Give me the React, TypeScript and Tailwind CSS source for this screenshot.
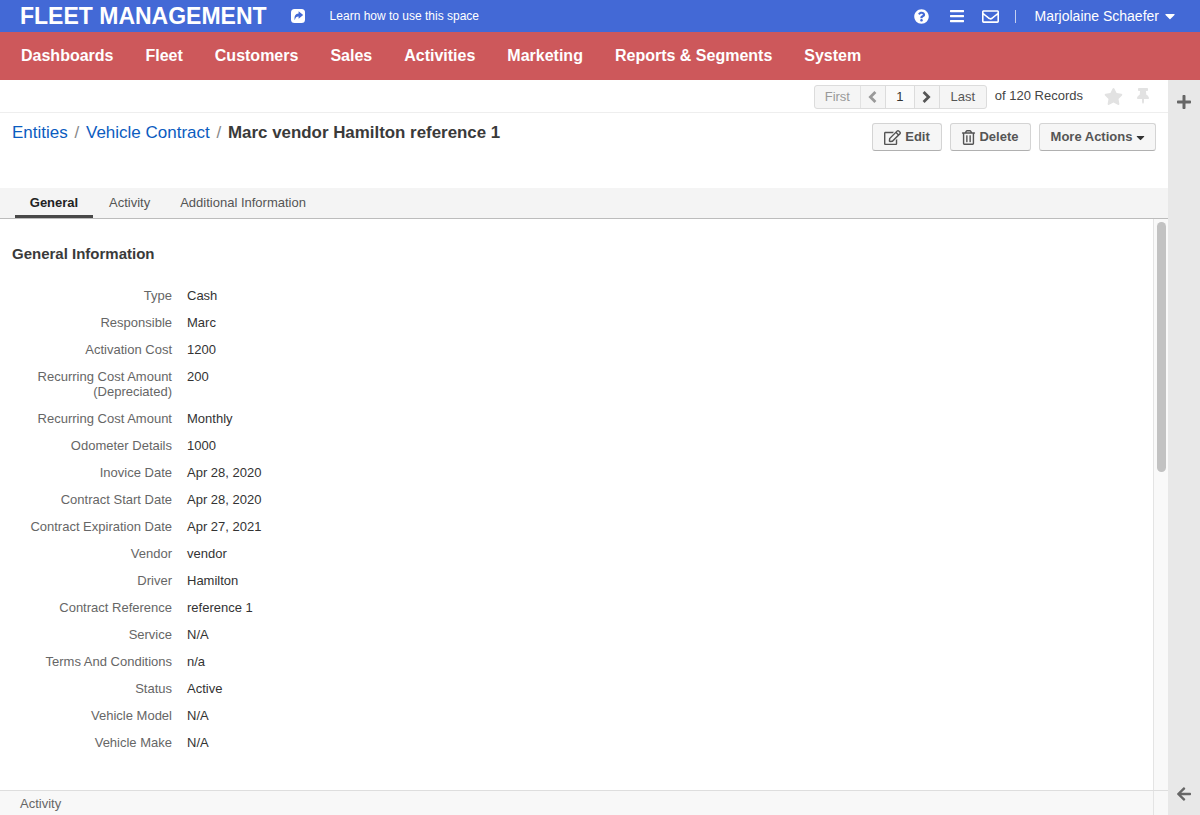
import type { ReactNode } from "react";
import {
  FaArrowLeft,
  FaBars,
  FaCaretDown,
  FaPlus,
  FaQuestionCircle,
  FaRegEdit,
  FaRegEnvelope,
  FaRegTrashAlt,
  FaStar,
  FaThumbtack,
} from "react-icons/fa";

const navItems = ["Dashboards", "Fleet", "Customers", "Sales", "Activities", "Marketing", "Reports & Segments", "System"];

const fields: [string, string][] = [
  ["Type", "Cash"],
  ["Responsible", "Marc"],
  ["Activation Cost", "1200"],
  ["Recurring Cost Amount (Depreciated)", "200"],
  ["Recurring Cost Amount", "Monthly"],
  ["Odometer Details", "1000"],
  ["Inovice Date", "Apr 28, 2020"],
  ["Contract Start Date", "Apr 28, 2020"],
  ["Contract Expiration Date", "Apr 27, 2021"],
  ["Vendor", "vendor"],
  ["Driver", "Hamilton"],
  ["Contract Reference", "reference 1"],
  ["Service", "N/A"],
  ["Terms And Conditions", "n/a"],
  ["Status", "Active"],
  ["Vehicle Model", "N/A"],
  ["Vehicle Make", "N/A"],
];

// solid rounded square with the share arrow cut out
function ShareIcon() {
  return (
    <svg viewBox="0 0 14 14" className="ml-[24px] w-[14px] h-[14px]">
      <rect width="14" height="14" rx="3.5" fill="#ffffff" />
      <path d="M7.6 2.2 L12.2 6 L7.6 9.8 V7.6 C5.6 7.5 4.4 8.6 3.8 11.2 C2.8 7.4 4.4 4.6 7.6 4.4 Z" fill="#4369d6" />
    </svg>
  );
}

// thick pager chevron
function Chevron({ direction }: { direction: "left" | "right" }) {
  return (
    <svg viewBox="0 0 9 12" className="w-[9px] h-[12px]" fill="none" stroke="currentColor" strokeWidth="2.8">
      <path d={direction === "left" ? "M7.4 1 L2.4 6 L7.4 11" : "M1.6 1 L6.6 6 L1.6 11"} />
    </svg>
  );
}

function Header() {
  return (
    <>
      <div className="h-8 bg-[#4369d6] text-white flex items-center pl-5 pr-[22px]">
        <span className="text-[23px] font-bold leading-8">FLEET MANAGEMENT</span>
        <ShareIcon />
        <span className="ml-[25px] text-[12px]">Learn how to use this space</span>
        <div className="ml-auto flex items-center">
          <FaQuestionCircle className="text-[15px]" />
          <FaBars className="ml-[20px] text-[16px]" />
          <FaRegEnvelope className="ml-[17px] text-[17px]" />
          <div className="ml-[16px] w-px h-[13px] bg-[#c5d0f0]" />
          <span className="ml-[18px] text-[14px]">Marjolaine Schaefer</span>
          <FaCaretDown className="ml-[3px] text-[16px]" />
        </div>
      </div>
      <nav className="h-12 bg-[#cd585b] text-white flex items-center pl-[21px] gap-[32px]">
        {navItems.map((item) => (
          <span key={item} className="text-[16px] font-bold">
            {item}
          </span>
        ))}
      </nav>
    </>
  );
}

function Pager() {
  return (
    <div className="h-[33px] border-b border-[#eeeeee] flex items-center justify-end pr-[17px] text-[13px]">
      <div className="flex h-[24px] mt-px items-stretch border border-[#dcdcdc] rounded-[3px] bg-[#f5f5f5] text-[#555]">
        <span className="w-[46px] flex items-center justify-center text-[#999] border-r border-[#e2e2e2]">First</span>
        <span className="w-[25px] flex items-center justify-center text-[#999] border-r border-[#dcdcdc]">
          <Chevron direction="left" />
        </span>
        <span className="w-[29px] flex items-center justify-center bg-[#fafafa] text-[#333] border-r border-[#dcdcdc]">1</span>
        <span className="w-[25px] flex items-center justify-center border-r border-[#dcdcdc]">
          <Chevron direction="right" />
        </span>
        <span className="w-[46px] flex items-center justify-center">Last</span>
      </div>
      <span className="ml-[8px] text-[#444]">of 120 Records</span>
      <FaStar className="ml-[21px] text-[19px] text-[#e2e2e2]" />
      <FaThumbtack className="ml-[12px] text-[16px] text-[#e2e2e2]" />
    </div>
  );
}

function ActionButton({ icon, label, width, caret }: { icon?: ReactNode; label: string; width: string; caret?: boolean }) {
  return (
    <button
      className={`${width} h-[28px] flex items-center justify-center gap-[4px] rounded-[3px] border border-[#d4d4d4] border-b-[#b0b0b0] bg-[#f6f6f6] text-[13px] font-bold text-[#555]`}
    >
      {icon}
      {label}
      {caret && <FaCaretDown className="-mx-[2.5px] text-[13px] text-[#333]" />}
    </button>
  );
}

function TitleBar() {
  return (
    <div className="h-[75px] flex items-start justify-between pl-3 pr-3">
      <div className="flex items-center text-[17px] leading-[20px] mt-[10px]">
        <span className="text-[#0b5cc0]">Entities</span>
        <span className="mx-[6.75px] text-[#888]">/</span>
        <span className="text-[#0b5cc0]">Vehicle Contract</span>
        <span className="mx-[6.75px] text-[#888]">/</span>
        <span className="font-bold text-[#3a3a3a] text-[16.9px]">Marc vendor Hamilton reference 1</span>
      </div>
      <div className="flex gap-[8px] mt-[10px]">
        <ActionButton width="w-[70px]" icon={<FaRegEdit className="text-[17px]" />} label="Edit" />
        <ActionButton width="w-[81px]" icon={<FaRegTrashAlt className="-mx-px text-[15px]" />} label="Delete" />
        <ActionButton width="w-[117px]" label="More Actions" caret />
      </div>
    </div>
  );
}

function Tabs() {
  return (
    <div className="h-[31px] bg-[#f4f4f4] border-b border-[#bcbcbc] flex pl-[15px] text-[13px] text-[#555]">
      <span className="w-[78px] h-[30px] pt-[3px] flex items-center justify-center font-bold text-[#222] border-b-[3px] border-[#484848]">General</span>
      <span className="ml-[16px] h-[30px] flex items-center">Activity</span>
      <span className="ml-[30px] h-[30px] flex items-center">Additional Information</span>
    </div>
  );
}

export default function App() {
  return (
    <div className="h-[815px] w-[1200px] overflow-hidden flex flex-col bg-white font-['Liberation_Sans',Arial,sans-serif]">
      <Header />
      <div className="flex flex-1 min-h-0">
        <div className="flex-1 flex flex-col min-w-0">
          <Pager />
          <TitleBar />
          <Tabs />
          <div className="flex-1 flex min-h-0">
            <div className="flex-1 pl-3 pt-[26px]">
              <h2 className="text-[15px] font-bold text-[#3a3a3a] leading-[18px]">General Information</h2>
              <dl className="mt-[25px] text-[13px] leading-[15px]">
                {fields.map(([label, value]) => (
                  <div key={label} className="flex pb-3">
                    <dt className="w-[160px] text-right text-[#666]">{label}</dt>
                    <dd className="ml-[15px] text-[#333]">{value}</dd>
                  </div>
                ))}
              </dl>
            </div>
            <div className="w-[15px] border-l border-[#e4e4e4] bg-[#f9f9f9] pl-[3px] pt-[3px]">
              <div className="w-[9px] h-[250px] rounded-full bg-[#c2c2c2]" />
            </div>
          </div>
          <div className="h-[25px] bg-[#f8f8f8] border-t border-[#dedede] pl-5 flex items-center text-[13px] text-[#666]">
            <span className="flex-1 pt-px">Activity</span>
            <div className="w-[15px] h-full border-l border-[#e4e4e4]" />
          </div>
        </div>
        <aside className="w-[32px] bg-[#e8e8e8] flex flex-col items-center justify-between text-[#666] pt-[14px] pb-[13px]">
          <FaPlus className="text-[16px]" />
          <FaArrowLeft className="text-[16px]" />
        </aside>
      </div>
    </div>
  );
}
